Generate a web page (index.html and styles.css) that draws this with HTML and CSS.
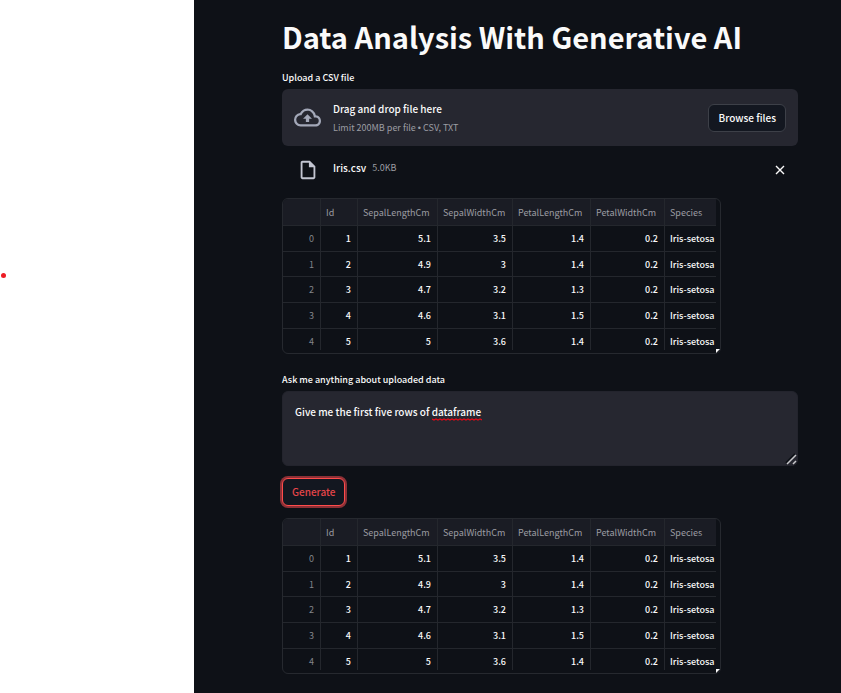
FILE: index.html
```
<!DOCTYPE html>
<html lang="en">
<head>
<meta charset="utf-8">
<title>Data Analysis With Generative AI</title>
<link rel="stylesheet" href="styles.css">
</head>
<body>
<div class="margin"><span class="dot"></span></div>
<main class="app">
  <h1>Data Analysis With Generative AI</h1>

  <label class="label" for="browse">Upload a CSV file</label>
  <section class="dropzone">
    <svg class="cloud" viewBox="0 0 24 24" aria-hidden="true"><path d="M19.35 10.04A7.49 7.49 0 0 0 12 4C9.11 4 6.6 5.64 5.35 8.04A5.994 5.994 0 0 0 0 14c0 3.31 2.69 6 6 6h13c2.76 0 5-2.24 5-5 0-2.64-2.05-4.78-4.65-4.96zM19 18H6c-2.21 0-4-1.79-4-4 0-2.05 1.53-3.76 3.56-3.97l1.07-.11.5-.95A5.469 5.469 0 0 1 12 6c2.62 0 4.88 1.86 5.39 4.43l.3 1.5 1.53.11A2.98 2.98 0 0 1 22 15c0 1.65-1.35 3-3 3zM8 13h2.55v3h2.9v-3H16l-4-4z"/></svg>
    <div class="hint">
      <span class="hint-main">Drag and drop file here</span>
      <small>Limit 200MB per file <span class="bullet">•</span> CSV, TXT</small>
    </div>
    <button class="btn" id="browse" type="button">Browse files</button>
  </section>

  <div class="file">
    <svg class="doc" viewBox="0 0 24 24" aria-hidden="true"><path d="M14 2H6c-1.100 0-2 .9-2 2v16c0 1.100.89 2 1.990 2H18c1.100 0 2-.9 2-2V8l-6-6zM6 20V4h7v5h5v11H6z"/></svg>
    <span class="file-name">Iris.csv</span>
    <small>5.0KB</small>
    <button class="remove" type="button" aria-label="Remove file"><svg viewBox="0 0 10 10" aria-hidden="true"><path d="M1 1l8 8M9 1L1 9"/></svg></button>
  </div>

  <div class="frame">
    <div class="clip">
      <table>
        <colgroup><col class="c-index"><col class="c-id"><col class="c-sl"><col class="c-sw"><col class="c-pl"><col class="c-pw"><col class="c-sp"></colgroup>
        <thead><tr><th></th><th>Id</th><th>SepalLengthCm</th><th>SepalWidthCm</th><th>PetalLengthCm</th><th>PetalWidthCm</th><th>Species</th></tr></thead>
        <tbody>
          <tr><td>0</td><td>1</td><td>5.1</td><td>3.5</td><td>1.4</td><td>0.2</td><td>Iris-setosa</td></tr>
          <tr><td>1</td><td>2</td><td>4.9</td><td>3</td><td>1.4</td><td>0.2</td><td>Iris-setosa</td></tr>
          <tr><td>2</td><td>3</td><td>4.7</td><td>3.2</td><td>1.3</td><td>0.2</td><td>Iris-setosa</td></tr>
          <tr><td>3</td><td>4</td><td>4.6</td><td>3.1</td><td>1.5</td><td>0.2</td><td>Iris-setosa</td></tr>
          <tr><td>4</td><td>5</td><td>5</td><td>3.6</td><td>1.4</td><td>0.2</td><td>Iris-setosa</td></tr>
        </tbody>
      </table>
    </div>
    <svg class="corner" viewBox="0 0 4 4" aria-hidden="true"><path d="M0 0h4L0 4z"/></svg>
  </div>

  <label class="label label-ask" for="ask">Ask me anything about uploaded data</label>
  <div class="ask">
    <textarea id="ask" spellcheck="false">Give me the first five rows of dataframe</textarea>
    <svg class="squiggle" viewBox="0 0 50 3" aria-hidden="true"><path d="M0 1l2 1 2-1 2 1 2-1 2 1 2-1 2 1 2-1 2 1 2-1 2 1 2-1 2 1 2-1 2 1 2-1 2 1 2-1 2 1 2-1 2 1 2-1 2 1 2-1 2 1"/></svg>
    <svg class="grip" viewBox="0 0 12 12" aria-hidden="true"><path class="grip-shade" d="M1 10l9-9"/><path class="grip-line" d="M2 11l9-9M8 11l3-3"/></svg>
  </div>
  <button class="btn generate" type="button">Generate</button>

  <div class="frame">
    <div class="clip">
      <table>
        <colgroup><col class="c-index"><col class="c-id"><col class="c-sl"><col class="c-sw"><col class="c-pl"><col class="c-pw"><col class="c-sp"></colgroup>
        <thead><tr><th></th><th>Id</th><th>SepalLengthCm</th><th>SepalWidthCm</th><th>PetalLengthCm</th><th>PetalWidthCm</th><th>Species</th></tr></thead>
        <tbody>
          <tr><td>0</td><td>1</td><td>5.1</td><td>3.5</td><td>1.4</td><td>0.2</td><td>Iris-setosa</td></tr>
          <tr><td>1</td><td>2</td><td>4.9</td><td>3</td><td>1.4</td><td>0.2</td><td>Iris-setosa</td></tr>
          <tr><td>2</td><td>3</td><td>4.7</td><td>3.2</td><td>1.3</td><td>0.2</td><td>Iris-setosa</td></tr>
          <tr><td>3</td><td>4</td><td>4.6</td><td>3.1</td><td>1.5</td><td>0.2</td><td>Iris-setosa</td></tr>
          <tr><td>4</td><td>5</td><td>5</td><td>3.6</td><td>1.4</td><td>0.2</td><td>Iris-setosa</td></tr>
        </tbody>
      </table>
    </div>
    <svg class="corner" viewBox="0 0 4 4" aria-hidden="true"><path d="M0 0h4L0 4z"/></svg>
  </div>
</main>
</body>
</html>
```
FILE: styles.css
```
* { box-sizing: border-box; }

body {
  margin: 0;
  display: flex;
  min-height: 100vh;
  background: #fff;
  color: #fafafa;
  font: 500 9px/16px "Noto Sans CJK SC", "Noto Sans", sans-serif;
}

button, textarea { font: inherit; color: inherit; }

.margin {
  flex: 0 0 194px;
  padding: 273px 0 0 1px;
}

.dot {
  display: block;
  width: 5px;
  height: 5px;
  border-radius: 50%;
  background: #ed1c24;
}

.app {
  flex: 1;
  min-width: 0;
  padding: 14px 43px 19px 88px;
  background: #0e1117;
}

h1 {
  margin: 0 0 12px;
  font-size: 29px;
  line-height: 44px;
  font-weight: 700;
}

.label { display: block; margin-bottom: 3px; }

.dropzone {
  display: flex;
  align-items: center;
  height: 57px;
  padding: 0 12px;
  border-radius: 6px;
  background: #262730;
}

.cloud { width: 27px; height: 27px; fill: #a3a8b8; }

.hint {
  display: flex;
  flex-direction: column;
  gap: 3px;
  flex: 1;
  padding: 2px 0 0 12px;
}

.hint-main, .file-name { font-size: 10px; }

small { font-size: 9px; font-weight: 400; color: #9c9da3; }
.bullet { font-family: "Liberation Sans", sans-serif; }

.btn {
  height: 28px;
  padding: 0 9px;
  border: 1px solid #3d4048;
  border-radius: 6px;
  background: #131720;
  font-size: 10px;
}

.file {
  display: flex;
  align-items: center;
  height: 48px;
  padding: 0 13px 0 15px;
}

.file-name, .file small { padding-bottom: 4px; }
.doc { width: 22px; height: 22px; margin-right: 14px; fill: #c3c6d2; }
.file-name { margin-right: 6px; }

.remove {
  display: flex;
  margin-left: auto;
  padding: 0;
  border: 0;
  background: none;
}

.remove svg { width: 10px; height: 10px; fill: none; stroke: #fafafa; stroke-width: 1.4; }

.frame {
  position: relative;
  width: fit-content;
  margin-top: 4px;
  padding: 0 4px 3px 0;
  border: 1px solid #26292f;
  border-radius: 6px;
}

.clip { height: 151px; overflow: hidden; border-top-left-radius: 5px; }

table { table-layout: fixed; width: 433px; border-collapse: separate; border-spacing: 0; }

.c-index { width: 38px; }
.c-id { width: 37px; }
.c-sl { width: 80px; }
.c-sw { width: 75px; }
.c-pl { width: 78px; }
.c-pw { width: 74px; }
.c-sp { width: 51px; }

th, td {
  height: 26px;
  padding: 1px 6px 0 5px;
  border: solid #24272d;
  border-width: 0 1px 1px 0;
  line-height: 24px;
  text-align: right;
  white-space: nowrap;
}

tr:nth-child(3n + 2) td { height: 25px; line-height: 23px; }

th {
  height: 27px;
  padding-top: 2px;
  background: #1a1c24;
  color: #9c9da3;
  font-weight: 400;
  text-align: left;
}

td:first-child { color: #83858b; font-weight: 400; }
th:last-child, td:last-child { padding-right: 0; border-right: 0; text-align: left; }

.corner { position: absolute; right: 0; bottom: 0; width: 4px; height: 4px; fill: #fafafa; }

.label-ask { margin-top: 18px; }

.ask { position: relative; height: 75px; margin-bottom: 12px; }

textarea {
  display: block;
  width: 100%;
  height: 100%;
  padding: 12px;
  border: 1px solid #23242d;
  border-radius: 6px;
  background: #262730;
  font-size: 10px;
  resize: none;
  outline: 0;
}

.squiggle { position: absolute; left: 150px; top: 27px; width: 50px; height: 3px; fill: none; stroke: #e00b18; stroke-width: 1.3; }
.grip { position: absolute; right: 1px; bottom: 1px; width: 12px; height: 12px; fill: none; }
.grip-shade { stroke: #0e1117; stroke-width: 2; }
.grip-line { stroke: #c8c8cc; stroke-width: 1.5; }

.generate {
  display: block;
  margin-bottom: 12px;
  border-color: #ff4b4b;
  box-shadow: 0 0 0 2px #8c3036;
  color: #e54549;
}
```
